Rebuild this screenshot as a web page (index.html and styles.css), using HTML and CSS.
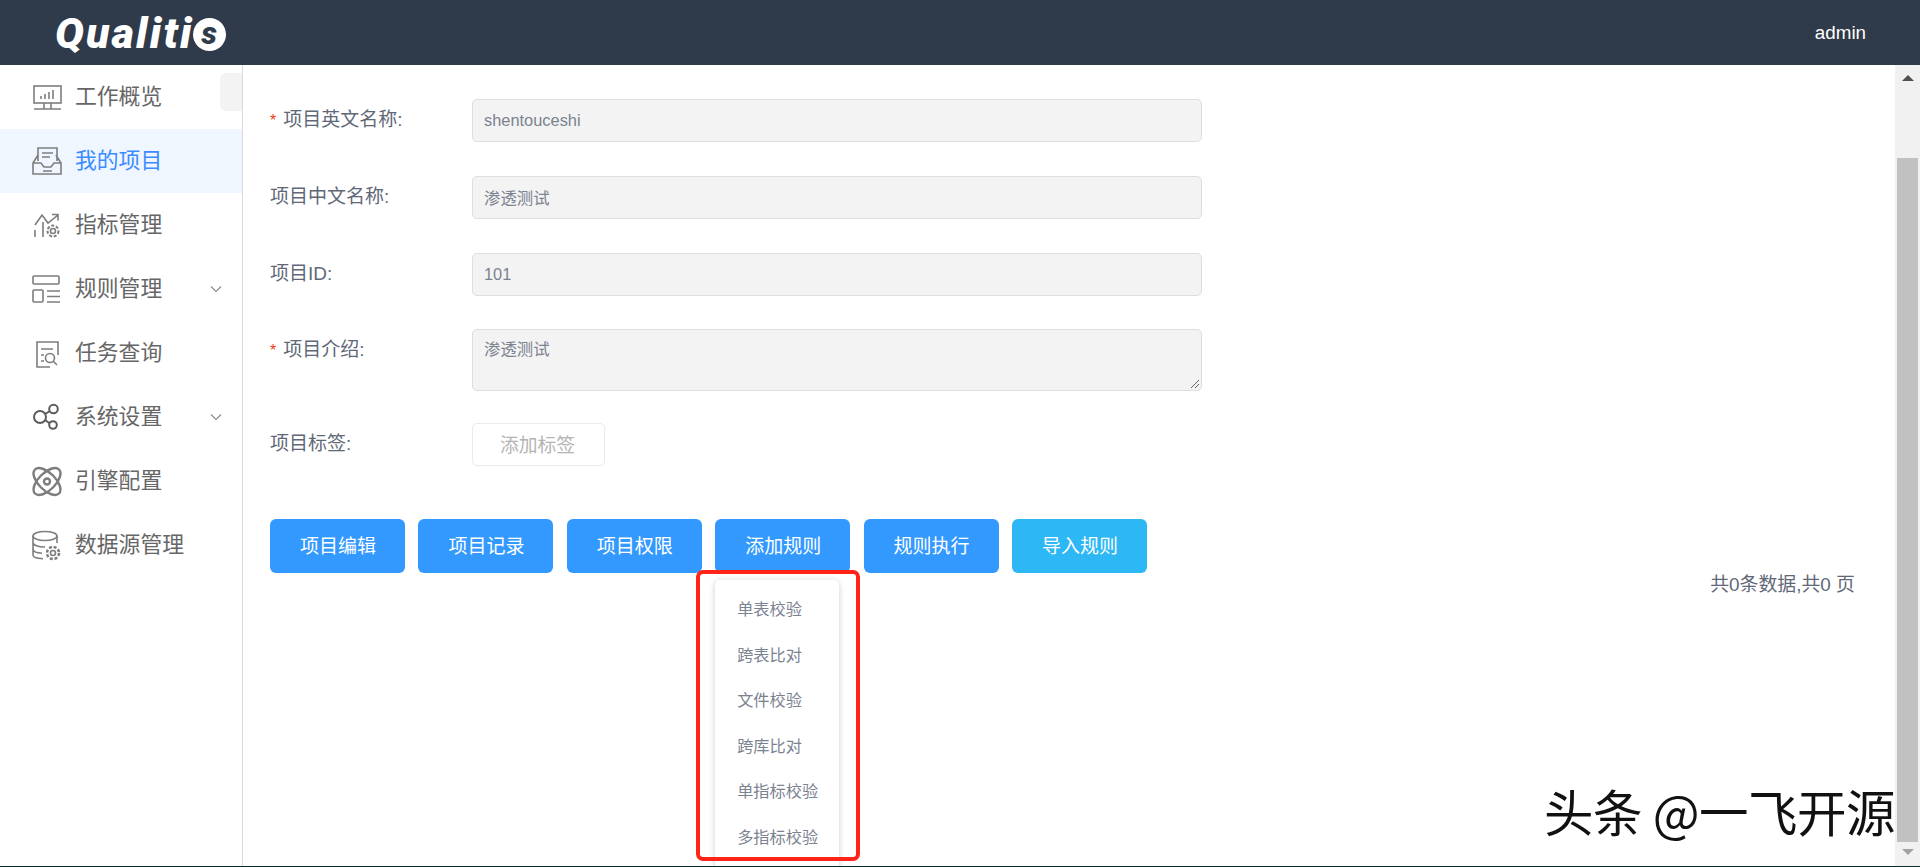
FILE: index.html
```html
<!DOCTYPE html>
<html lang="zh-CN">
<head>
    <meta charset="UTF-8">
    <title>Qualitis</title>
    <link rel="stylesheet" href="styles.css">
</head>
<body>
    <header class="top-bar">
        <div class="logo">Qualiti<span class="logo-s">s</span></div>
        <div class="user">admin</div>
    </header>

    <div class="layout">
        <nav class="side-nav">
            <span class="collapse-tab"></span>
            <a class="nav-item">
                <svg class="nav-icon" viewBox="0 0 30 30"><rect x="2" y="4" width="27" height="17"/><path d="M9 17v-3M13 17v-5M17 17v-7M21 17V8M12 21v6M19 21v6M2 27h27"/></svg>
                <span>工作概览</span>
            </a>
            <a class="nav-item active">
                <svg class="nav-icon" viewBox="0 0 30 30"><path d="M6 15V2h19v13M10 7h11M10 11h8M6 9l-5 8v11h28V17l-5-8M1 17h8l3 4h7l3-4h7M11 25h9"/></svg>
                <span>我的项目</span>
            </a>
            <a class="nav-item">
                <svg class="nav-icon" viewBox="0 0 30 30"><path d="M3 20v7M11 12v15M3 15l7-10 6 8 10-8M20 4.500h6v6"/><circle cx="21" cy="21" r="2.500"/><circle cx="21" cy="21" r="5.500" stroke-dasharray="3 1.700" stroke-width="2"/></svg>
                <span>指标管理</span>
            </a>
            <a class="nav-item has-sub">
                <svg class="nav-icon" viewBox="0 0 30 30"><rect x="1" y="2" width="26" height="8" rx="1"/><rect x="1" y="16" width="10" height="12" rx="1"/><path d="M15 17h13M15 22.500h13M15 28h13"/></svg>
                <span>规则管理</span>
                <svg class="chevron" viewBox="0 0 12 8"><path d="M1 1.5l5 5 5-5"/></svg>
            </a>
            <a class="nav-item">
                <svg class="nav-icon" viewBox="0 0 30 30"><path d="M26 17V4H5v25h13M9 11h12M9 17h3M9 23h3"/><circle cx="18" cy="20" r="4.500"/><path d="M21.500 23.500l3.500 3.500"/></svg>
                <span>任务查询</span>
            </a>
            <a class="nav-item has-sub">
                <svg class="nav-icon dark" viewBox="0 0 30 30"><circle cx="8" cy="15" r="6"/><circle cx="21.500" cy="7" r="4.300"/><circle cx="21" cy="23" r="3.800"/><path d="M13 12l5-3M13 18l5 3.500"/></svg>
                <span>系统设置</span>
                <svg class="chevron" viewBox="0 0 12 8"><path d="M1 1.5l5 5 5-5"/></svg>
            </a>
            <a class="nav-item">
                <svg class="nav-icon thick" viewBox="0 0 30 30"><ellipse cx="15" cy="15.500" rx="17" ry="8.500" transform="rotate(45 15 15.500)"/><ellipse cx="15" cy="15.500" rx="17" ry="8.500" transform="rotate(-45 15 15.500)"/><circle cx="15" cy="15.500" r="3"/></svg>
                <span>引擎配置</span>
            </a>
            <a class="nav-item">
                <svg class="nav-icon" viewBox="0 0 30 30"><ellipse cx="13" cy="6" rx="12" ry="4.500"/><path d="M1 6v19c0 2 4 3.500 10 3.700M25 6v7M1 12.500c0 2.500 5 4.500 12 4.500M1 19c0 2.300 4 4 9 4.300"/><circle cx="21" cy="23" r="2.500"/><circle cx="21" cy="23" r="6" stroke-dasharray="3 1.700" stroke-width="2.500"/></svg>
                <span>数据源管理</span>
            </a>
        </nav>

        <main class="content">
            <div class="form-row">
                <label class="form-label required">项目英文名称:</label>
                <div class="field">shentouceshi</div>
            </div>
            <div class="form-row">
                <label class="form-label">项目中文名称:</label>
                <div class="field field-cjk">渗透测试</div>
            </div>
            <div class="form-row row-id">
                <label class="form-label">项目ID:</label>
                <div class="field">101</div>
            </div>
            <div class="form-row row-intro">
                <label class="form-label required">项目介绍:</label>
                <div class="field field-area">渗透测试
                    <svg class="grip" viewBox="0 0 12 12"><path d="M11 3l-8 8M11 7l-4 4"/></svg>
                </div>
            </div>
            <div class="form-row row-tag">
                <label class="form-label">项目标签:</label>
                <button class="tag-btn">添加标签</button>
            </div>

            <div class="actions">
                <button class="btn">项目编辑</button>
                <button class="btn">项目记录</button>
                <button class="btn">项目权限</button>
                <div class="btn-wrap">
                    <button class="btn">添加规则</button>
                    <ul class="dropdown">
                        <li>单表校验</li>
                        <li>跨表比对</li>
                        <li>文件校验</li>
                        <li>跨库比对</li>
                        <li>单指标校验</li>
                        <li>多指标校验</li>
                    </ul>
                    <div class="red-mark"></div>
                </div>
                <button class="btn">规则执行</button>
                <button class="btn btn-info">导入规则</button>
            </div>
            <div class="page-info">共0条数据,共0 页</div>
        </main>

        <div class="scrollbar">
            <span class="arrow-up"></span>
            <div class="thumb"></div>
            <span class="arrow-down"></span>
        </div>
    </div>

    <div class="watermark">头条 @一飞开源</div>
</body>
</html>
```

FILE: styles.css
```css
* { box-sizing: border-box; }
html, body { height: 100%; }
body {
    margin: 0;
    height: 867px;
    overflow: hidden;
    background: #fff;
    border-bottom: 1px solid #0c2b2e;
    font-family: "Liberation Sans", "Noto Sans CJK SC", sans-serif;
    color: #515a6e;
    display: flex;
    flex-direction: column;
}

/* top bar */
.top-bar {
    height: 65px;
    flex: none;
    background: #2f3a4a;
    display: flex;
    align-items: center;
    justify-content: space-between;
    padding: 0 54px 0 55px;
}
.logo {
    display: flex;
    align-items: center;
    font-family: Roboto, sans-serif;
    font-weight: 900;
    font-style: italic;
    font-size: 43px;
    letter-spacing: 2.2px;
    color: #fff;
}
.logo-s {
    width: 33px;
    height: 33px;
    margin: 4px 0 0 -1px;
    border-radius: 50%;
    background: #fff;
    color: #2f3a4a;
    font-size: 31px;
    line-height: 32px;
    letter-spacing: 0;
    text-align: center;
}
.user { font-size: 18.8px; color: #fff; }

.layout { flex: 1; display: flex; min-height: 0; }

/* side nav */
.side-nav {
    position: relative;
    width: 243px;
    flex: none;
    border-right: 1px solid #d9d9d9;
}
.collapse-tab {
    position: absolute;
    top: 8px;
    right: 0;
    width: 22px;
    height: 38px;
    background: #f3f3f3;
    border-radius: 6px 0 0 6px;
}
.nav-item {
    height: 64px;
    display: flex;
    align-items: center;
    gap: 13px;
    padding-left: 32px;
    font-size: 21.8px;
    color: #666;
}
.nav-item span { padding-bottom: 5px; }
.nav-item.active { background: #f0f6ff; color: #3b8cff; }
.nav-icon {
    width: 30px;
    height: 30px;
    flex: none;
    fill: none;
    stroke: #7d7d7d;
    stroke-width: 1.6;
    overflow: visible;
}
.nav-icon.dark { stroke: #5c5c5c; stroke-width: 2; }
.nav-icon.thick { stroke-width: 2.4; }
.has-sub .chevron {
    width: 12px;
    height: 8px;
    margin-left: 35px;
    fill: none;
    stroke: #8b8b8b;
    stroke-width: 1.2;
}

/* form */
.content { flex: 1; padding: 34px 40px 0 27px; min-width: 0; }
.form-row { display: flex; margin-bottom: 34px; }
.row-id { margin-bottom: 33px; }
.row-intro { margin-bottom: 32px; }
.row-tag { margin-bottom: 53px; }
.form-label {
    width: 202px;
    flex: none;
    font-size: 19px;
    line-height: 42px;
    color: #5f6878;
}
.form-label.required::before {
    content: "*";
    margin-right: 7px;
    color: #ed4014;
    font-size: 16px;
}
.field {
    position: relative;
    width: 730px;
    height: 43px;
    padding: 0 11px;
    line-height: 41px;
    font-size: 16.4px;
    color: #7b8290;
    background: #f3f3f3;
    border: 1px solid #dcdee2;
    border-radius: 5px;
}
.field-cjk { padding-top: 1px; }
.field-area { height: 62px; line-height: 20px; padding-top: 9px; }
.grip {
    position: absolute;
    right: 1px;
    bottom: 1px;
    width: 12px;
    height: 12px;
    fill: none;
    stroke: #666;
    stroke-width: 1;
}
.tag-btn {
    width: 133px;
    height: 43px;
    padding: 0 2px 2px 0;
    font: inherit;
    font-size: 18.8px;
    color: #b4b4b4;
    background: #fff;
    border: 1px solid #e8eaec;
    border-radius: 5px;
}

/* action buttons */
.actions { display: flex; gap: 13.4px; }
.btn-wrap { position: relative; }
.btn {
    display: block;
    width: 135px;
    height: 54px;
    padding: 0 0 4px 1px;
    font: inherit;
    font-size: 19px;
    color: #fff;
    background: #3399ff;
    border: 0;
    border-radius: 6px;
}
.btn-info { background: #2db7f5; }
.dropdown {
    position: absolute;
    top: 61px;
    left: 0;
    width: 124px;
    height: 300px;
    margin: 0;
    padding: 7px 0 0;
    list-style: none;
    background: #fff;
    border-radius: 5px;
    box-shadow: 0 1px 6px rgba(0, 0, 0, .2);
}
.dropdown li {
    height: 45.6px;
    line-height: 45.6px;
    padding-left: 22px;
    font-size: 16.2px;
    color: #7b8290;
}
.red-mark {
    position: absolute;
    top: 51px;
    left: -19px;
    width: 164px;
    height: 291px;
    border: 4px solid #ff2318;
    border-radius: 7px;
}
.page-info {
    line-height: 24px;
    text-align: right;
    font-size: 18.9px;
    color: #5f6878;
}

/* scrollbar */
.scrollbar {
    width: 25px;
    flex: none;
    display: flex;
    flex-direction: column;
    align-items: center;
    background: #f1f1f1;
    padding-top: 10px;
}
.thumb {
    width: 21px;
    height: 684px;
    margin-top: 77px;
    margin-bottom: 7px;
    background: #c1c1c1;
}
.arrow-up, .arrow-down {
    width: 0;
    height: 0;
    border-left: 6px solid transparent;
    border-right: 6px solid transparent;
}
.arrow-up { border-bottom: 6px solid #505050; }
.arrow-down { border-top: 6px solid #a3a3a3; }

.watermark {
    position: absolute;
    top: 777px;
    right: 25px;
    font-family: "Noto Sans CJK SC", sans-serif;
    font-weight: 400;
    font-size: 49.5px;
    letter-spacing: -.5px;
    line-height: 68px;
    white-space: nowrap;
    color: #111;
}
```
